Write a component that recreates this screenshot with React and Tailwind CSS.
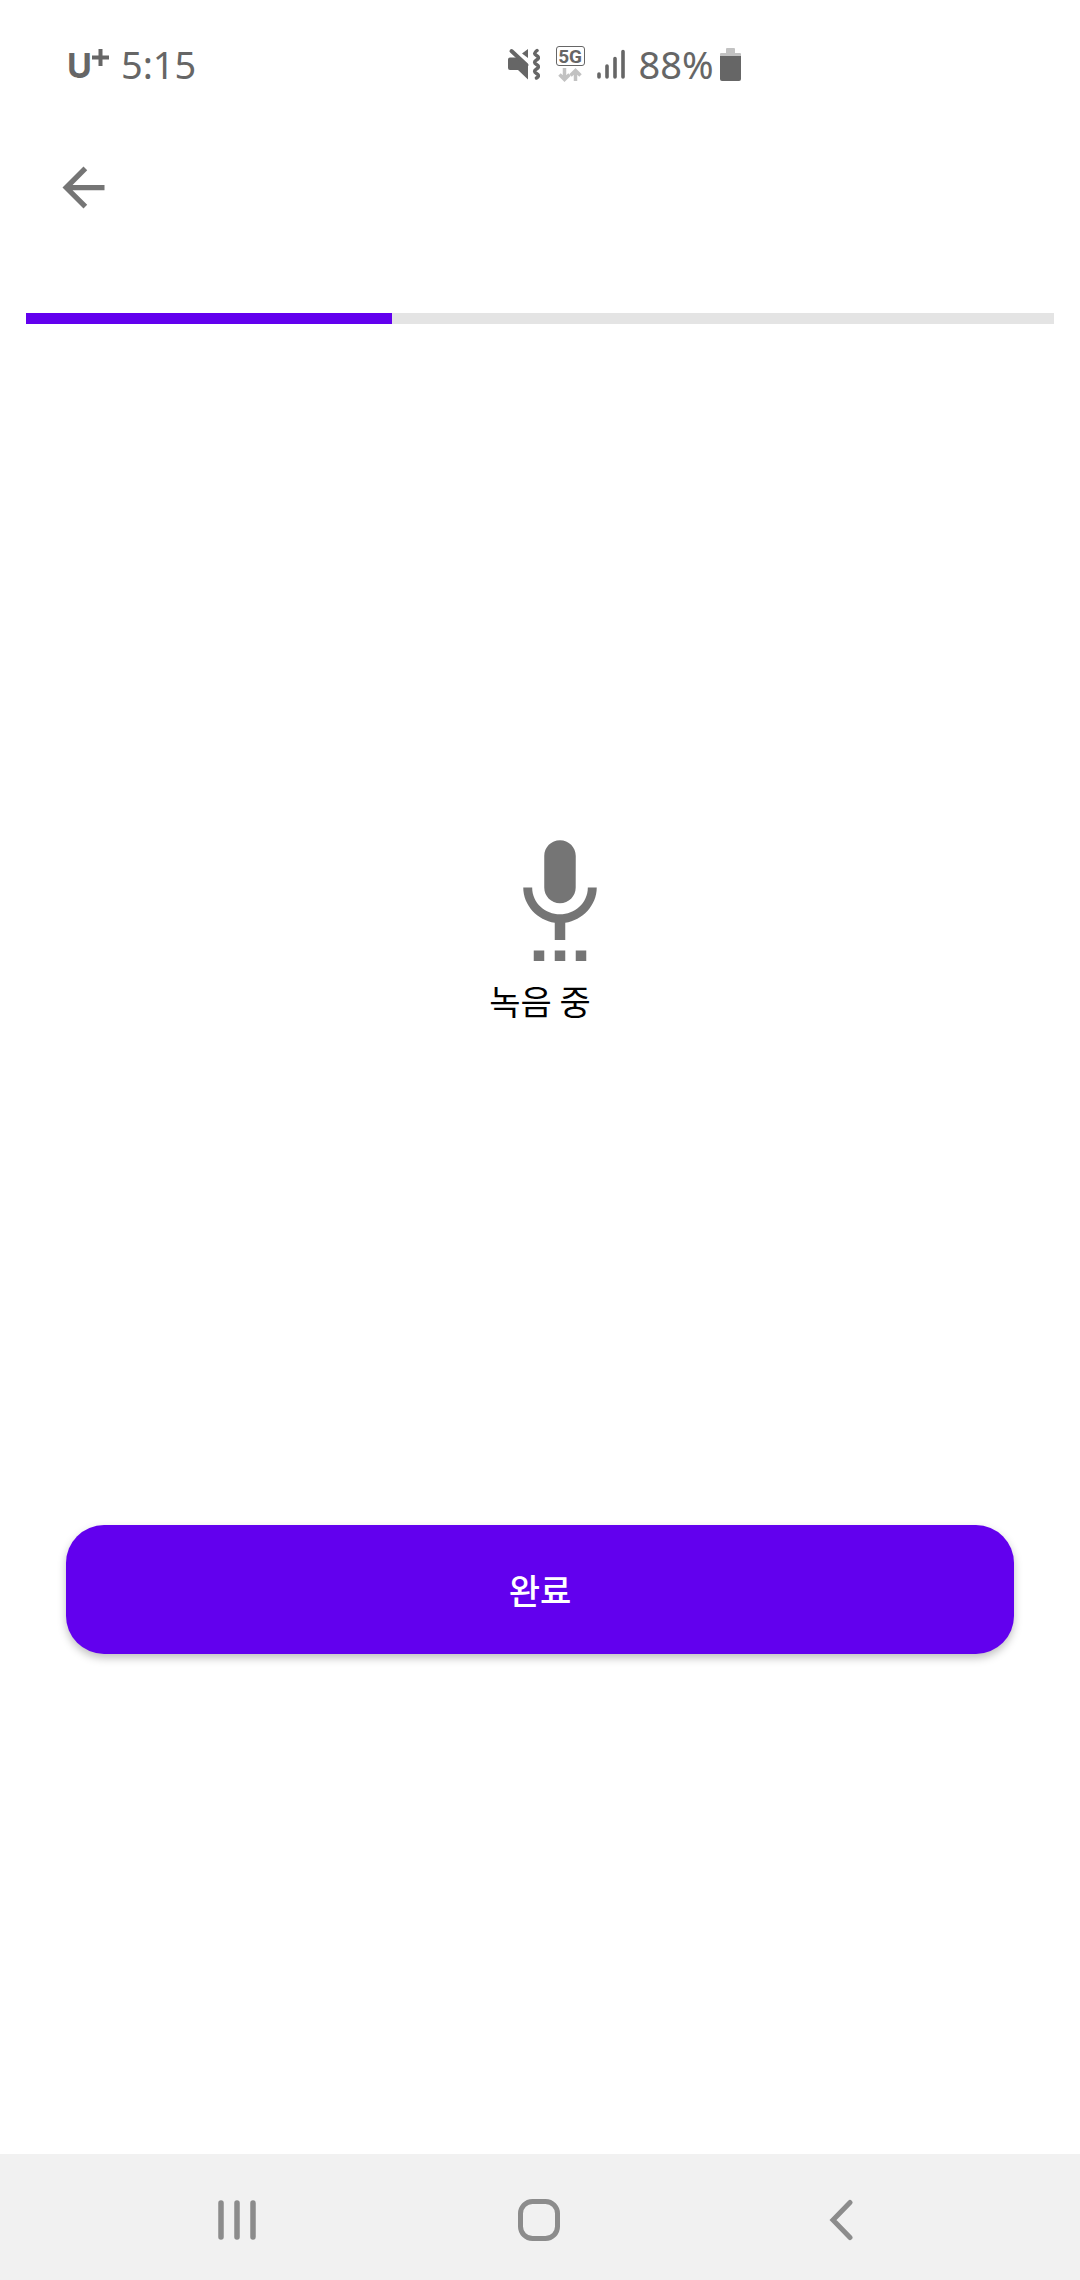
import { useState } from 'react';

function MutedIcon() {
  return (
    <svg width="32" height="32" viewBox="0 0 32 32" fill="#666666" aria-hidden="true">
      <path d="M2 9.500h9l9 8v14L10 22H2a2 2 0 0 1-2-2v-8.500a2 2 0 0 1 2-2z" />
      <path d="M20 1v9l-6-4.500z" />
      <path d="M3.500 3L18.500 17" stroke="#666666" strokeWidth="4" strokeLinecap="round" />
      <path
        d="M29 2.500c-3 2.500-3 3.500-.500 5s2.500 3 0 4.500-2.500 3 0 4.500 2.500 3 0 4.500-2.500 3 0 4.500 2.500 3 0 4.500"
        fill="none"
        stroke="#666666"
        strokeWidth="3.500"
        strokeLinecap="round"
      />
    </svg>
  );
}

function NetworkBadge() {
  return (
    <div className="flex w-[29px] flex-col items-center gap-[2px]">
      <span className="flex h-5 w-full items-center justify-center rounded-[3px] border border-[#666666] font-['Roboto',sans-serif] text-[19px] leading-none font-bold">
        5G
      </span>
      <svg width="24" height="14" viewBox="0 0 24 14" fill="none" stroke="#c2c2c2" strokeWidth="3.500" aria-hidden="true">
        <path d="M6.500 0v11M1.500 6.500l5 5 5-5" />
        <path d="M17.500 13V3M12.500 7.500l5-5 5 5" />
      </svg>
    </div>
  );
}

function SignalIcon() {
  return (
    <svg width="28" height="32" viewBox="0 0 28 32" stroke="#666666" strokeWidth="3.600" strokeLinecap="round" aria-hidden="true">
      <path d="M2 26v3M10 18v11M18 10.500V29M26 3.500V29" />
    </svg>
  );
}

function BatteryIcon() {
  return (
    <svg width="21" height="33" viewBox="0 0 21 33" aria-hidden="true">
      <path d="M6 1a1 1 0 0 1 1-1h7a1 1 0 0 1 1 1v4h5a1 1 0 0 1 1 1v3H0V6a1 1 0 0 1 1-1h5z" fill="#c2c2c2" />
      <path d="M0 8h21v23a2 2 0 0 1-2 2H2a2 2 0 0 1-2-2z" fill="#666666" />
    </svg>
  );
}

function StatusBar() {
  return (
    <div className="flex h-32 items-center font-['Noto_Sans',sans-serif] text-[38px] leading-none text-[#666666]">
      <div className="flex w-[47%] items-center gap-3 pl-[67px]">
        <span className="flex items-start pt-1 font-['Inter',sans-serif] text-[34px] font-bold">
          U
          <svg width="17" height="17" viewBox="0 0 17 17" stroke="#666666" strokeWidth="4" aria-label="+">
            <path d="M8.500 0v17M0 8.500h17" />
          </svg>
        </span>
        <span>5:15</span>
      </div>
      <div className="flex items-center">
        <MutedIcon />
        <div className="ml-4 flex items-center gap-3">
          <NetworkBadge />
          <SignalIcon />
          <span className="flex items-center gap-[6px] pl-[2px]">
            88%
            <BatteryIcon />
          </span>
        </div>
      </div>
    </div>
  );
}

function NavBar() {
  return (
    <nav className="mt-auto grid h-[126px] grid-cols-3 bg-[#f1f1f1] pt-[6px] pr-22 pl-[86px]">
      <button type="button" aria-label="최근 앱" className="flex items-center justify-center">
        <svg width="42" height="42" viewBox="0 0 42 42" stroke="#8c8c8c" strokeWidth="5.500" strokeLinecap="round">
          <path d="M5 4v34M21 4v34M37 4v34" />
        </svg>
      </button>
      <button type="button" aria-label="홈" className="flex items-center justify-center">
        <svg width="42" height="42" viewBox="0 0 42 42" fill="none" stroke="#8c8c8c" strokeWidth="5">
          <rect x="2.500" y="2.500" width="37" height="37" rx="12" />
        </svg>
      </button>
      <button type="button" aria-label="뒤로" className="flex items-center justify-center">
        <svg width="42" height="42" viewBox="0 0 42 42" fill="none" stroke="#8c8c8c" strokeWidth="5" strokeLinecap="round">
          <path d="M30 3.500L13 21l17 17.500" />
        </svg>
      </button>
    </nav>
  );
}

export default function App() {
  const [progress] = useState(35.6);

  return (
    <div className="flex min-h-screen flex-col bg-white font-['Noto_Sans_CJK_KR',sans-serif]">
      <StatusBar />

      <header className="flex h-[118px] items-center px-[52px]">
        <button type="button" aria-label="뒤로 가기">
          <svg width="63" height="63" viewBox="0 0 24 24" fill="#757575">
            <path d="M20 11H7.830l5.590-5.590L12 4l-8 8 8 8 1.410-1.410L7.830 13H20v-2z" />
          </svg>
        </button>
      </header>

      <main className="flex flex-col pt-[67px]">
        <div
          role="progressbar"
          aria-label="진행률"
          aria-valuenow={progress}
          className="mx-[26px] h-[11px] bg-[#e4e4e4]"
        >
          <div className="h-full bg-[#6200ee]" style={{ width: `${progress}%` }} />
        </div>

        <section className="flex flex-col items-center pt-[511px]">
          <div className="pl-10">
            <svg width="126" height="126" viewBox="0 0 24 24" fill="#757575" aria-hidden="true">
              <path d="M7 24h2v-2H7v2zm5-11c1.660 0 2.990-1.340 2.990-3L15 4c0-1.660-1.340-3-3-3S9 2.340 9 4v6c0 1.660 1.340 3 3 3zm-1 11h2v-2h-2v2zm4 0h2v-2h-2v2zm4-14h-1.700c0 3-2.540 5.100-5.300 5.100S6.700 13 6.700 10H5c0 3.410 2.720 6.230 6 6.720V20h2v-3.280c3.280-.490 6-3.310 6-6.720z" />
            </svg>
          </div>
          <p className="mt-4 text-[34px] leading-[48px] text-black">녹음 중</p>
        </section>

        <div className="px-[66px] pt-[500px] pb-16">
          <button
            type="button"
            className="h-[129px] w-full rounded-[38px] bg-[#6200ee] text-[34px] leading-[48px] font-medium text-white shadow-[0_4px_8px_rgba(0,0,0,0.25)]"
          >
            완료
          </button>
        </div>
      </main>

      <NavBar />
    </div>
  );
}
